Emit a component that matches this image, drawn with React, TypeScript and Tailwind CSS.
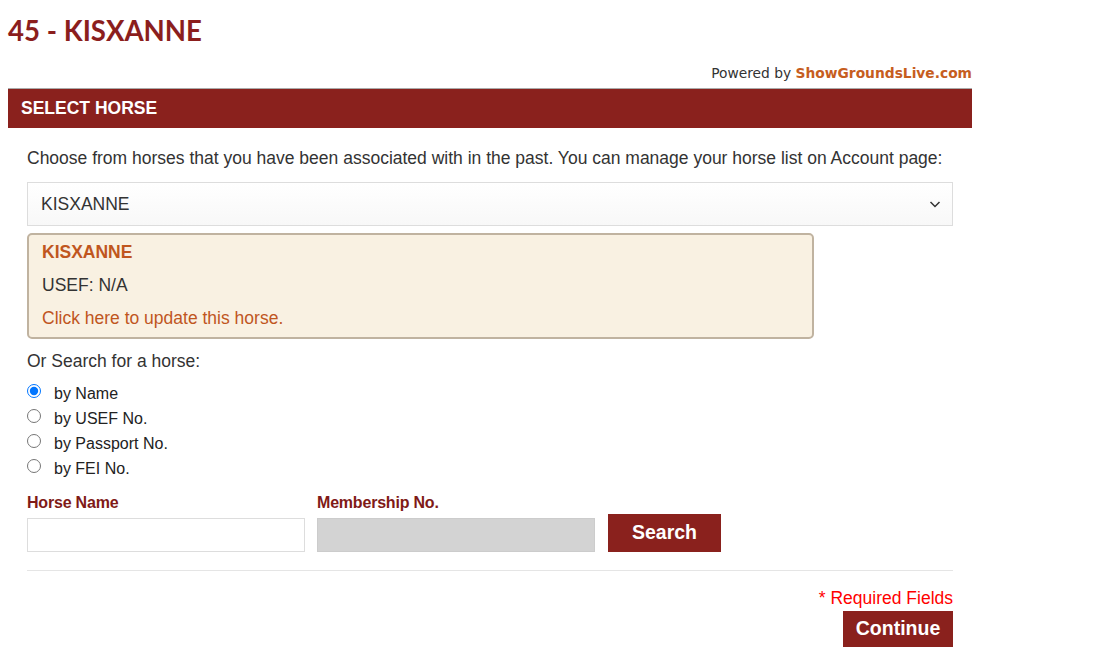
import React from "react";

export default function App() {
  const radios = ["by Name", "by USEF No.", "by Passport No.", "by FEI No."];
  return (
    <div className="bg-white w-[1093px] min-h-[659px] px-[8px]" style={{ fontFamily: '"Liberation Sans", Arial, sans-serif' }}>
      <div className="w-[964px]">
        <h1 className="pt-[14px] text-[27.6px] leading-[34px] font-bold text-[#8b1e1d]" style={{ fontFamily: 'Lato, sans-serif' }}>
          45 - KISXANNE
        </h1>
        <div className="mt-[15px] text-right text-[13.8px] leading-[20px] text-[#333]" style={{ fontFamily: '"DejaVu Sans", Verdana, sans-serif' }}>
          Powered by <span className="font-bold text-[#c65d1e]">ShowGroundsLive.com</span>
        </div>
        <div className="mt-[5px] h-[40px] border-t border-[#aaa] bg-[#8a211d] flex items-center px-[13px]">
          <span className="text-white font-bold text-[17.5px]">SELECT HORSE</span>
        </div>
        <div className="px-[19px] pt-[19px]">
          <p className="text-[17.5px] leading-[22px] text-[#333]">
            Choose from horses that you have been associated with in the past. You can manage your horse list on Account page:
          </p>
          <div className="mt-[13px] h-[44px] border border-[#ddd] bg-gradient-to-b from-white to-[#f8f8f8] flex items-center justify-between pl-[13px] pr-[10px] text-[17.5px] text-[#333]">
            <span>KISXANNE</span>
            <svg width="14" height="14" viewBox="0 0 14 14" fill="none" stroke="#333" strokeWidth="1.5">
              <path d="M2.5 5 L7 9.5 L11.5 5" />
            </svg>
          </div>
          <div className="mt-[7px] w-[787px] border-2 border-[#c0b3a0] rounded-[5px] bg-[#f9f1e2] px-[13px] pt-[6px] pb-[8px] text-[17.5px] leading-[22px]">
            <div className="font-bold text-[#c0561e]">KISXANNE</div>
            <div className="mt-[11px] text-[#333]">USEF: N/A</div>
            <div className="mt-[11px] text-[#c0561e]">Click here to update this horse.</div>
          </div>
          <p className="mt-[11px] text-[17.5px] leading-[22px] text-[#333]">Or Search for a horse:</p>
          <div className="mt-[9px]">
            {radios.map((r, i) => (
              <label key={r} className="flex items-center h-[25px] text-[16px] text-[#222]">
                <input type="radio" name="search" defaultChecked={i === 0} className="m-0 w-[14px] h-[14px] -mt-[5px]" />
                <span className="ml-[13px]">{r}</span>
              </label>
            ))}
          </div>
          <div className="mt-[12px] flex items-end">
            <div className="flex flex-col">
              <span className="text-[16px] leading-[20px] font-bold text-[#7f1a17] tracking-[-0.2px]">Horse Name</span>
              <input className="mt-[5px] w-[278px] h-[34px] border border-[#ddd] bg-white outline-none" />
            </div>
            <div className="flex flex-col ml-[12px]">
              <span className="text-[16px] leading-[20px] font-bold text-[#7f1a17] tracking-[-0.2px]">Membership No.</span>
              <input disabled className="mt-[5px] w-[278px] h-[34px] border border-[#ccc] bg-[#d3d3d3] outline-none" />
            </div>
            <button className="ml-[13px] w-[113px] h-[38px] bg-[#8a211d] text-white font-bold text-[19.5px]">Search</button>
          </div>
          <div className="mt-[18px] border-t border-[#e5e5e5]" />
          <div className="mt-[16px] flex flex-col items-end">
            <span className="text-[17.5px] leading-[22px] text-[#ff0000]">* Required Fields</span>
            <button className="mt-[2px] w-[110px] h-[36px] bg-[#8a211d] text-white font-bold text-[19.5px]">Continue</button>
          </div>
        </div>
      </div>
    </div>
  );
}
